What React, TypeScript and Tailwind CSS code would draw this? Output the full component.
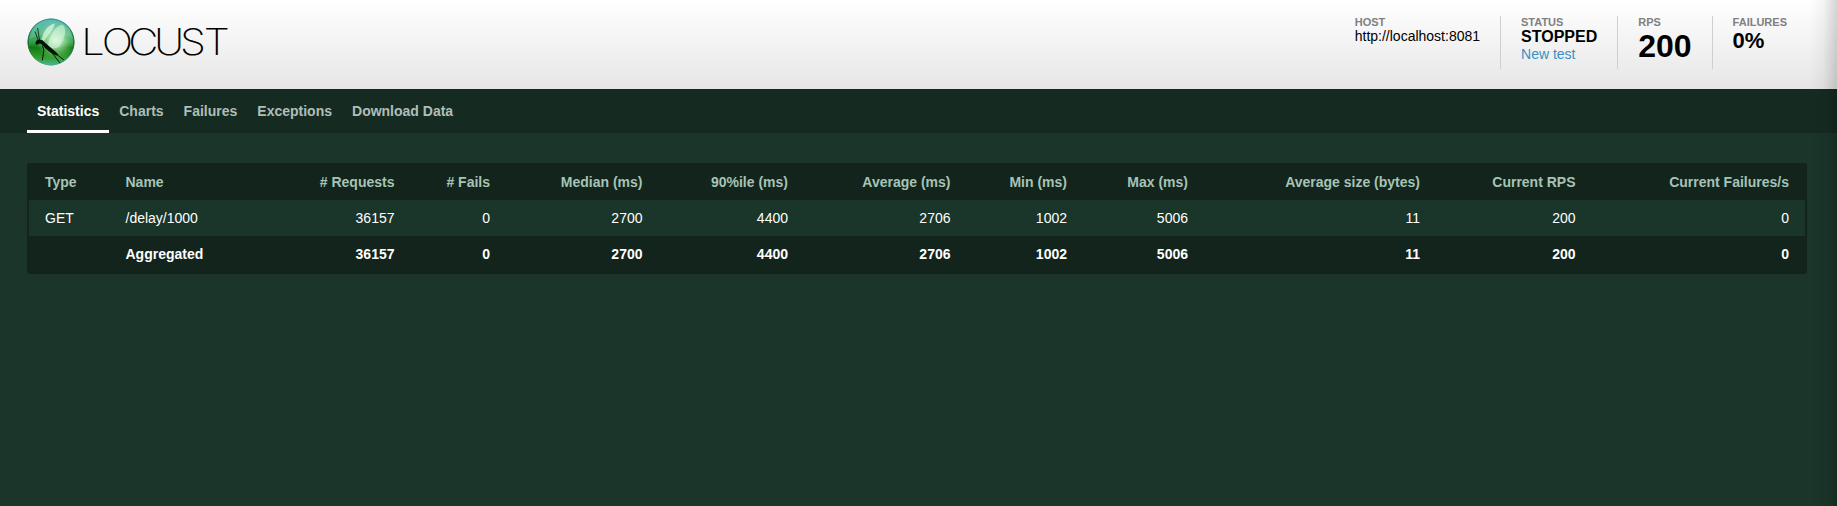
import React from "react";

const tabs = ["Statistics", "Charts", "Failures", "Exceptions", "Download Data"];

const columns = [
  "Type",
  "Name",
  "# Requests",
  "# Fails",
  "Median (ms)",
  "90%ile (ms)",
  "Average (ms)",
  "Min (ms)",
  "Max (ms)",
  "Average size (bytes)",
  "Current RPS",
  "Current Failures/s",
];

const numbers = ["36157", "0", "2700", "4400", "2706", "1002", "5006", "11", "200", "0"];

const rowGrid =
  "grid h-9 items-center grid-cols-[80.5px_170px_131px_95.5px_152.5px_145.5px_162.5px_116.5px_121px_232px_155.5px_213.5px]";

function cellClass(index: number) {
  return index < 2 ? "px-4 text-left" : "px-4 text-right";
}

function Logo() {
  return (
    <svg width="210" height="56" viewBox="0 0 210 56" aria-label="Locust">
      <defs>
        <linearGradient id="ball" x1="0" y1="0" x2="0" y2="1">
          <stop offset="0" stopColor="#45b0b4" />
          <stop offset="0.25" stopColor="#48ae80" />
          <stop offset="0.5" stopColor="#35a04c" />
          <stop offset="0.62" stopColor="#0f7a10" />
          <stop offset="0.85" stopColor="#35a030" />
          <stop offset="1" stopColor="#48b8a0" />
        </linearGradient>
        <radialGradient id="glow" cx="0.6" cy="0.46" r="0.42">
          <stop offset="0" stopColor="#f2fff0" stopOpacity="0.95" />
          <stop offset="0.4" stopColor="#c0efc0" stopOpacity="0.7" />
          <stop offset="1" stopColor="#6fca70" stopOpacity="0" />
        </radialGradient>
        <linearGradient id="rim" x1="0" y1="0" x2="0" y2="1">
          <stop offset="0" stopColor="#3a8f98" />
          <stop offset="0.5" stopColor="#17572a" />
          <stop offset="1" stopColor="#45a996" />
        </linearGradient>
      </defs>
      <circle cx="24" cy="26" r="23.4" fill="url(#ball)" />
      <circle cx="24" cy="26" r="23.4" fill="url(#glow)" />
      <path d="M3 23C4 11 13 4 24 4s20 7 21 18C35 17 15 17 3 23Z" fill="#a5efdc" opacity="0.22" />
      <circle cx="24" cy="26" r="23" fill="none" stroke="url(#rim)" strokeWidth="0.9" />
      <path d="M14.500 24C16 16 21 8.500 27.500 7.500C28.500 11 22 18 17 25Z" fill="#e2f8e5" opacity="0.7" />
      <path d="M21 30C23 18 29 9 35.500 8.800C41 12 37 26 31.500 31C28 33 24 33 21 30Z" fill="#d8f6dc" opacity="0.6" />
      <path
        d="M9.500 24.500L12 23.500 15.500 24.200 18 26.800 23 31 29.500 36.500 31.500 39 29 39.500 23.500 36.500 18.500 32.500 15 28.500 12.500 27.500 9.500 29 8.300 27Z"
        fill="#07110a"
      />
      <path
        d="M15.500 29.500L16.800 34.500 15.300 44.500M28.500 37.500L37 44M25 37L33 47"
        fill="none"
        stroke="#07150b"
        strokeWidth="1"
      />
      <path d="M11.300 24.500L8 15.500M12.500 24L10.600 12" fill="none" stroke="#07150b" strokeWidth="0.8" />
      <text
        transform="scale(1.14 1)"
        y="39"
        x="47.5 65.5 88.9 111.300 134.300 155"
        className="fill-black font-['Inter'] text-[36.5px] font-extralight"
      >
        LOCUST
      </text>
    </svg>
  );
}

export default function App() {
  return (
    <div className="relative h-[506px] w-full overflow-hidden bg-[#1b352a] font-['Liberation_Sans',Arial,sans-serif] text-sm">
      <header className="flex h-[89px] items-start justify-between bg-linear-to-b from-white to-[#e6e6e6] pl-[27px] pr-[30px] pt-4 text-black">
        <Logo />
        <div className="flex h-[53px] whitespace-nowrap">
          <div className="pr-5">
            <div className="h-3 text-[11px] leading-[12px] font-bold text-[#808080]">HOST</div>
            <div className="leading-4">http://localhost:8081</div>
          </div>
          <div className="border-l border-[#cfcfcf] px-5">
            <div className="h-3 text-[11px] leading-[12px] font-bold text-[#808080]">STATUS</div>
            <div className="pt-px text-base leading-4 font-bold">STOPPED</div>
            <a className="block pt-px leading-4 text-[#3690c4]">New test</a>
          </div>
          <div className="border-l border-[#cfcfcf] px-5">
            <div className="h-3 text-[11px] leading-[12px] font-bold text-[#808080]">RPS</div>
            <div className="pt-px text-[32px] leading-[34px] font-bold">200</div>
          </div>
          <div className="border-l border-[#cfcfcf] px-5">
            <div className="h-3 text-[11px] leading-[12px] font-bold text-[#808080]">FAILURES</div>
            <div className="pt-px text-[22px] leading-[24px] font-bold">0%</div>
          </div>
        </div>
      </header>

      <nav className="flex h-11 bg-[#152b22] pl-[27px] font-bold">
        {tabs.map((tab, i) => (
          <a
            key={tab}
            className={
              i === 0
                ? "border-b-3 border-white px-2.5 pt-3 leading-5 text-white"
                : "px-2.5 pt-3 leading-5 text-[#b0beb7]"
            }
          >
            {tab}
          </a>
        ))}
      </nav>

      <main className="pl-[27px] pt-[30px]">
        <table className="block w-[1780px] rounded-[3px] bg-[#12241c] px-0.5 pt-px pb-0.5 whitespace-nowrap">
          <thead className="block text-[#a6c3b5]">
            <tr className={rowGrid}>
              {columns.map((name, i) => (
                <th key={name} className={cellClass(i)}>
                  {name}
                </th>
              ))}
            </tr>
          </thead>
          <tbody className="block text-white">
            <tr className={rowGrid + " bg-[#1a352a]"}>
              {["GET", "/delay/1000", ...numbers].map((value, i) => (
                <td key={i} className={cellClass(i)}>
                  {value}
                </td>
              ))}
            </tr>
            <tr className={rowGrid + " font-bold"}>
              {["", "Aggregated", ...numbers].map((value, i) => (
                <td key={i} className={cellClass(i)}>
                  {value}
                </td>
              ))}
            </tr>
          </tbody>
        </table>
      </main>

      <div className="pointer-events-none absolute inset-y-0 right-0 w-7 bg-linear-to-r from-transparent via-black/4 to-black/16" />
    </div>
  );
}
